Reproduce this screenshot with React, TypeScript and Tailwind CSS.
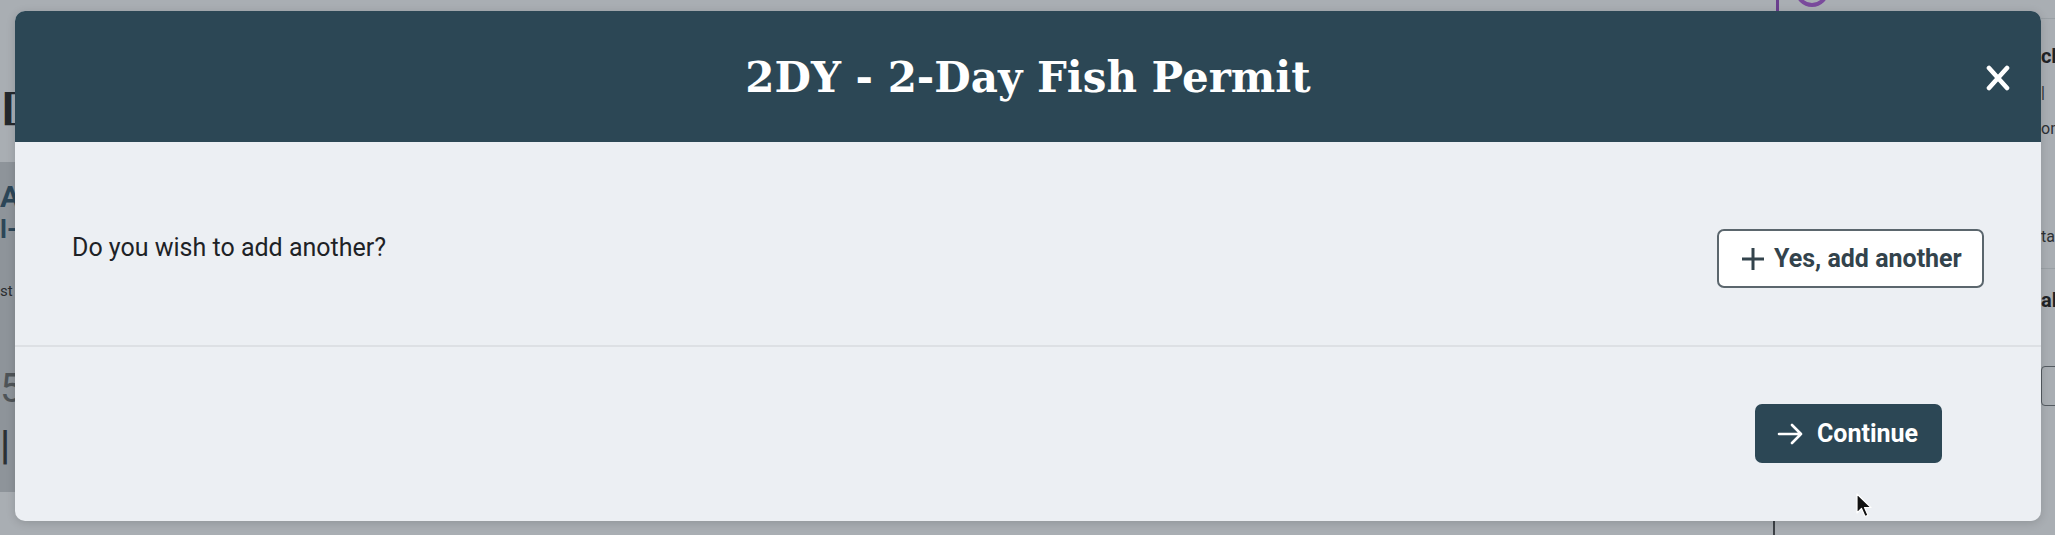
import React from 'react';

function PlusIcon() {
  return (
    <svg width="22" height="22" viewBox="0 0 22 22" fill="none" stroke="currentColor" strokeWidth="3" strokeLinecap="butt">
      <path d="M0 11h22M11 0v22" />
    </svg>
  );
}

function ArrowIcon() {
  return (
    <svg width="26" height="22" viewBox="0 0 26 22" fill="none" stroke="currentColor" strokeWidth="2.6" strokeLinecap="round" strokeLinejoin="round">
      <path d="M2 11h22M15 2l9 9-9 9" />
    </svg>
  );
}

function CloseIcon() {
  return (
    <svg width="24" height="26" viewBox="0 0 24 26" fill="none" stroke="currentColor" strokeWidth="4.6" strokeLinecap="round">
      <path d="M3 3l18 20M21 3L3 23" />
    </svg>
  );
}

function Cursor() {
  return (
    <svg width="16" height="26" viewBox="0 0 16 26">
      <path d="M1 1v19l4.5-4.5 3.5 8 3-1.3-3.5-7.7H15z" fill="#111" stroke="#fff" strokeWidth="1.2" strokeLinejoin="round" />
    </svg>
  );
}

// page behind the dialog, only its edges show
function BackdropPage() {
  return (
    <div className="flex h-full w-full" style={{ fontFamily: 'Roboto, "Liberation Sans", sans-serif' }}>
      <div className="w-[15px] overflow-hidden flex flex-col">
        <div className="h-[88px] shrink-0" />
        <div className="h-[40px] shrink-0 text-[38px] leading-[40px] font-bold text-[#24282c] whitespace-nowrap" style={{ fontFamily: '"DejaVu Serif", serif' }}>[t</div>
        <div className="h-[34px] shrink-0" />
        <div className="h-[330px] shrink-0 bg-[#8e949a] flex flex-col pt-[18px]">
          <div className="text-[30px] leading-[34px] font-bold text-[#2c4658] whitespace-nowrap">AI</div>
          <div className="text-[26px] leading-[30px] font-bold text-[#2c4658] whitespace-nowrap">l-</div>
          <div className="text-[15px] leading-[22px] text-[#2a2d30] mt-[36px] whitespace-nowrap">st</div>
          <div className="text-[40px] leading-[44px] text-[#4f5458] mt-[65px] whitespace-nowrap">5</div>
          <div className="text-[40px] leading-[44px] font-bold text-[#2c3135] mt-[13px] whitespace-nowrap">|</div>
        </div>
      </div>
      <div className="flex-1 flex flex-col">
        <div className="flex">
          <div className="ml-[1761px] w-[3px] h-[12px] bg-[#6b3f8e]" />
          <div className="ml-[16px] -mt-[27px] w-[34px] h-[34px] rounded-full border-[4px] border-[#7a4a9c]" />
        </div>
        <div className="flex-1" />
        <div className="ml-[1758px] w-[2px] h-[14px] bg-[#3c4146]" />
      </div>
      <div className="w-[14px] overflow-hidden flex flex-col pt-[18px]">
        <div className="border-t border-[#9aa0a5] pt-[24px] text-[20px] leading-[26px] font-bold text-[#1f2326] whitespace-nowrap">ch</div>
        <div className="mt-[12px] text-[16px] leading-[24px] text-[#2d3135] whitespace-nowrap">|</div>
        <div className="mt-[12px] text-[16px] leading-[24px] text-[#2d3135] whitespace-nowrap">on</div>
        <div className="mt-[84px] text-[16px] leading-[24px] text-[#2d3135] whitespace-nowrap">ta</div>
        <div className="border-b border-[#9aa0a5] h-[20px]" />
        <div className="pt-[18px] text-[20px] leading-[26px] font-bold text-[#1f2326] whitespace-nowrap">al</div>
        <div className="mt-[53px] h-[40px] w-[20px] border border-[#545b61] rounded-[4px]" />
      </div>
    </div>
  );
}

export default function App() {
  return (
    <div className="relative w-[2055px] h-[535px] overflow-hidden bg-[#a9aeb3]">
      <BackdropPage />

      {/* dialog */}
      <div
        className="absolute left-[15px] top-[11px] w-[2026px] h-[510px] rounded-[10px] overflow-hidden bg-[#eceff3] flex flex-col shadow-[0_2px_10px_rgba(0,0,0,0.15)]"
        style={{ fontFamily: 'Roboto, "Liberation Sans", sans-serif' }}
      >
        <div className="h-[131px] shrink-0 bg-[#2c4755] flex items-center justify-center relative">
          <h1 className="text-[42px] font-bold text-white leading-none pt-[2px]" style={{ fontFamily: '"DejaVu Serif", "Liberation Serif", serif' }}>
            2DY - 2-Day Fish Permit
          </h1>
          <button className="absolute right-[31px] top-[54px] text-white">
            <CloseIcon />
          </button>
        </div>

        <div className="h-[205px] shrink-0 flex items-start justify-between pt-[87px] px-[57px] border-b-2 border-[#dde0e4]">
          <p className="text-[25px] leading-[38px] text-[#1e2226]">Do you wish to add another?</p>
          <button className="h-[59px] w-[267px] flex items-center gap-[10px] pl-[23px] bg-white border-2 border-[#5b666d] rounded-[7px] text-[#33434c] text-[25px] font-bold">
            <PlusIcon />
            <span>Yes, add another</span>
          </button>
        </div>

        <div className="flex-1 flex justify-end items-start pt-[57px] pr-[99px]">
          <button className="h-[59px] w-[187px] flex items-center gap-[14px] pl-[22px] bg-[#2c4755] rounded-[7px] text-white text-[25px] font-bold">
            <ArrowIcon />
            <span>Continue</span>
          </button>
        </div>
      </div>

      <div className="absolute left-[1856px] top-[493px]">
        <Cursor />
      </div>
    </div>
  );
}
